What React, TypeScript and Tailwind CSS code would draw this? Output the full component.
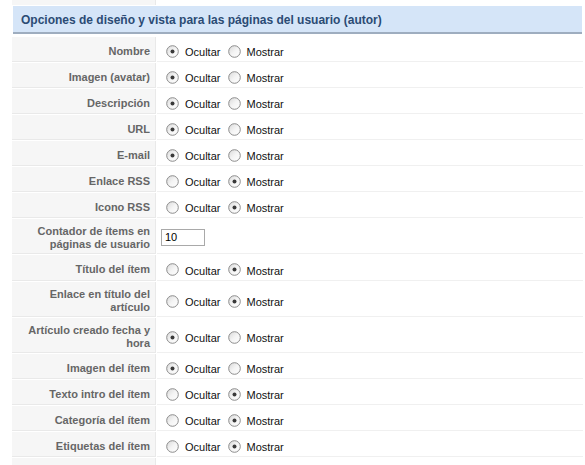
import React from "react";

type Row = { label: string[]; kind: "radio" | "input"; sel?: 0 | 1; h: number };

const rows: Row[] = [
  { label: ["Nombre"], kind: "radio", sel: 0, h: 26 },
  { label: ["Imagen (avatar)"], kind: "radio", sel: 0, h: 26 },
  { label: ["Descripción"], kind: "radio", sel: 0, h: 26 },
  { label: ["URL"], kind: "radio", sel: 0, h: 26 },
  { label: ["E-mail"], kind: "radio", sel: 0, h: 26 },
  { label: ["Enlace RSS"], kind: "radio", sel: 1, h: 26 },
  { label: ["Icono RSS"], kind: "radio", sel: 1, h: 26 },
  { label: ["Contador de ítems en", "páginas de usuario"], kind: "input", h: 36 },
  { label: ["Título del ítem"], kind: "radio", sel: 1, h: 27 },
  { label: ["Enlace en título del", "artículo"], kind: "radio", sel: 1, h: 36 },
  { label: ["Artículo creado fecha y", "hora"], kind: "radio", sel: 0, h: 36 },
  { label: ["Imagen del ítem"], kind: "radio", sel: 0, h: 26 },
  { label: ["Texto intro del ítem"], kind: "radio", sel: 1, h: 26 },
  { label: ["Categoría del ítem"], kind: "radio", sel: 1, h: 26 },
  { label: ["Etiquetas del ítem"], kind: "radio", sel: 1, h: 26 },
];

function Radio({ on }: { on: boolean }) {
  return (
    <svg width="13" height="13" viewBox="0 0 13 13" className="shrink-0">
      <defs>
        <linearGradient id="rg" x1="0" y1="0" x2="1" y2="1">
          <stop offset="0" stopColor="#d8d8d8" />
          <stop offset="0.5" stopColor="#f4f4f4" />
          <stop offset="1" stopColor="#ffffff" />
        </linearGradient>
      </defs>
      <circle cx="6.5" cy="6.5" r="5.8" fill="url(#rg)" stroke="#8c8c8c" strokeWidth="1" />
      {on && <circle cx="6.5" cy="6.5" r="2" fill="#3a3a3a" />}
    </svg>
  );
}

export default function App() {
  return (
    <div className="w-[585px] h-[465px] overflow-hidden bg-white font-['Liberation_Sans',Arial,sans-serif] text-[11px] text-[#111]">
      <div className="pl-[12px] pr-[2px]">
        <div className="flex h-[5px]">
          <div className="w-[144px] bg-[#f6f6f6] border-r border-[#e9e9e9]" />
        </div>
        <div className="ml-px mr-px mt-px h-[28px] bg-[#d5e5f8] border-b-2 border-[#9eadbf] flex items-center pl-[8px] pt-[1px]">
          <span className="font-bold text-[12px] text-[#2b4b74]">
            Opciones de diseño y vista para las páginas del usuario (autor)
          </span>
        </div>
        <div className="h-[3px]" />
        {rows.map((r, i) => (
          <div key={i} className="flex" style={{ height: r.h }}>
            <div className="w-[144px] mb-px bg-[#f6f6f6] border-b border-r border-[#e9e9e9] flex flex-col justify-center items-end pr-[5px] pt-[4px] font-bold text-[#666] leading-[13px] text-right">
              {r.label.map((l, j) => (
                <div key={j}>{l}</div>
              ))}
            </div>
            <div className="flex-1 mb-px ml-px border-b border-[#f0f0f0] flex items-center pl-[4px] pt-[4px]">
              {r.kind === "input" ? (
                <div className="w-[44px] h-[17px] border border-[#a9a9a9] bg-white pl-[3px] leading-[15px] text-[11px] text-black mt-[-1px]">
                  10
                </div>
              ) : (
                <div className="flex items-center">
                  <div className="flex items-center ml-[5px]">
                    <Radio on={r.sel === 0} />
                    <span className="ml-[6px] mt-[3px]">Ocultar</span>
                  </div>
                  <div className="flex items-center ml-[8px]">
                    <Radio on={r.sel === 1} />
                    <span className="ml-[5px] mt-[3px]">Mostrar</span>
                  </div>
                </div>
              )}
            </div>
          </div>
        ))}
        <div className="flex h-[10px]">
          <div className="w-[144px] bg-[#f6f6f6] border-r border-[#e9e9e9]" />
        </div>
      </div>
    </div>
  );
}
